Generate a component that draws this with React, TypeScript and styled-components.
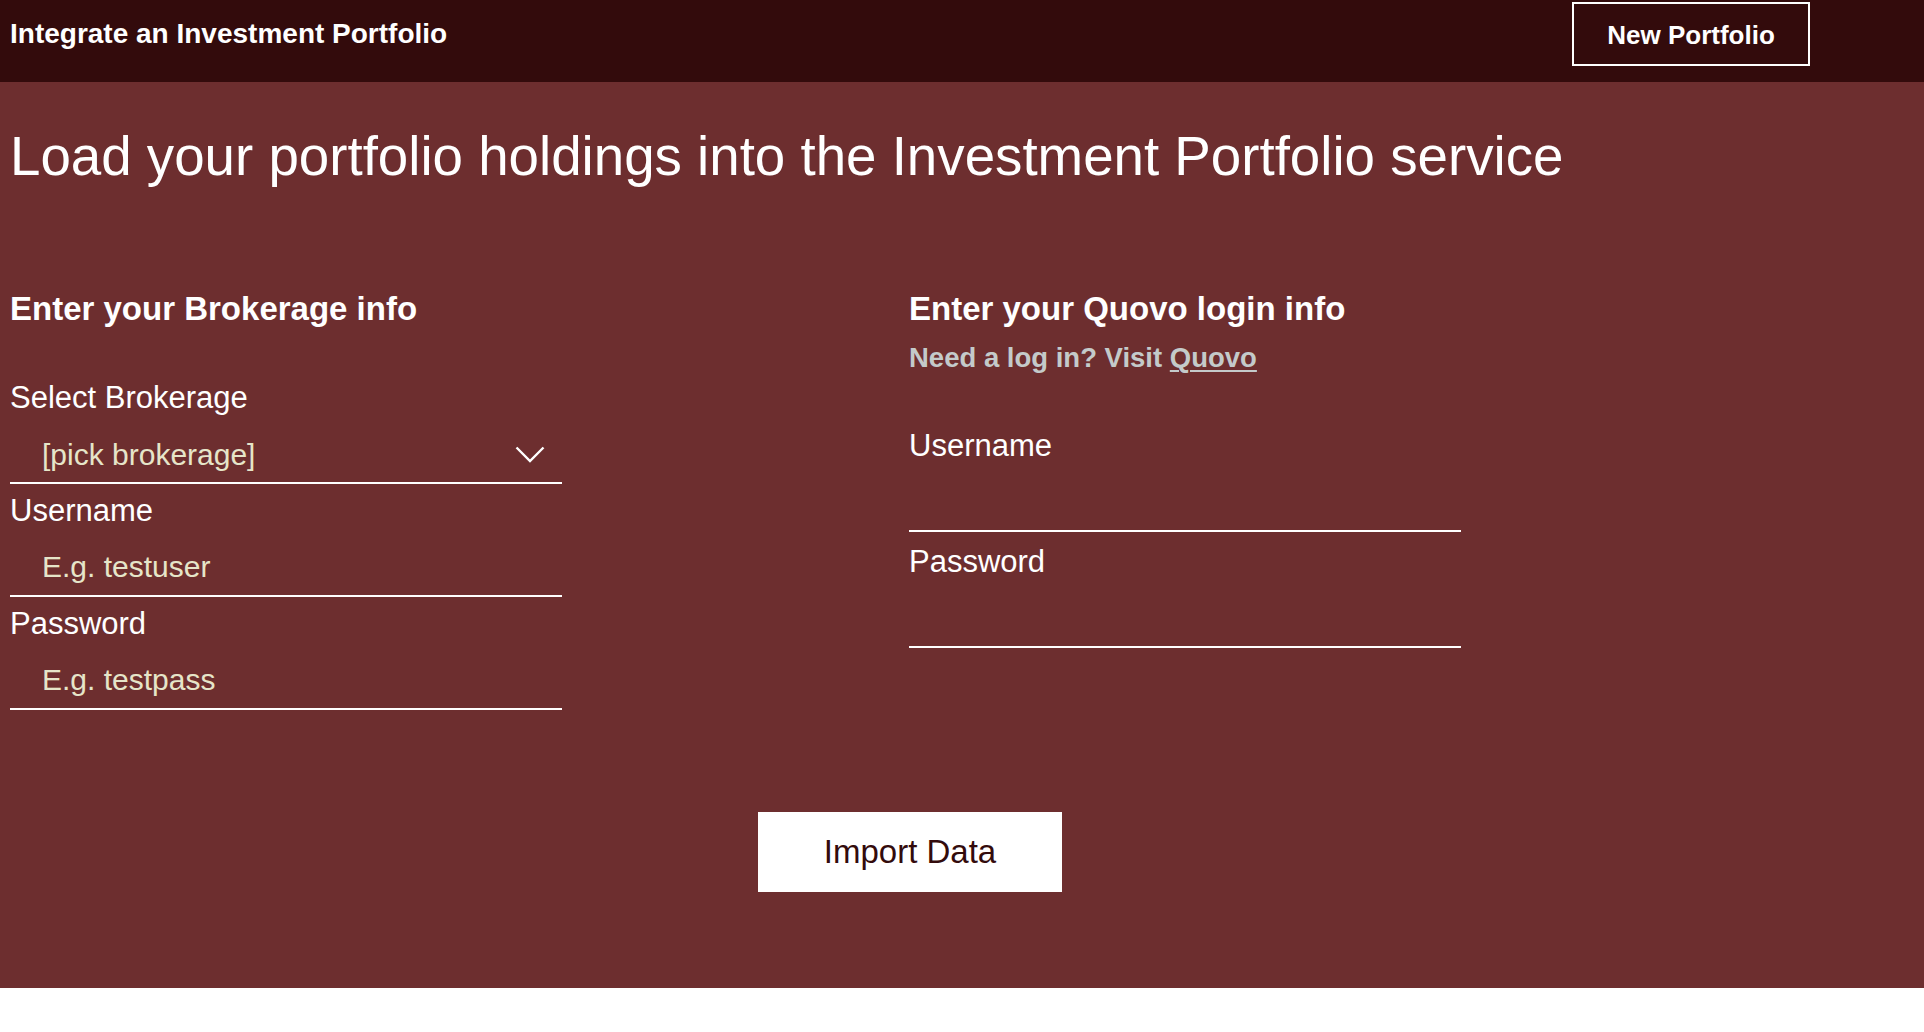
import React from "react";
import styled, { createGlobalStyle } from "styled-components";

const GlobalStyle = createGlobalStyle`
  body {
    margin: 0;
    background: #ffffff;
    font-family: "Liberation Sans", Arial, Helvetica, sans-serif;
  }
`;

const Container = styled.div`
  width: 1800px;
  margin-left: 10px;
`;

const TopBar = styled.header`
  background: #330b0c;
  padding: 2px 0 16px;
`;

const TopBarInner = styled(Container)`
  display: flex;
  justify-content: space-between;
  align-items: center;
`;

const AppTitle = styled.div`
  color: #ffffff;
  font-size: 28px;
  font-weight: 700;
  line-height: 32px;
`;

const OutlineButton = styled.button`
  width: 238px;
  height: 64px;
  background: transparent;
  border: 2px solid #ffffff;
  color: #ffffff;
  font-family: inherit;
  font-size: 26px;
  font-weight: 700;
  padding: 2px 0 0;
  cursor: pointer;
`;

const Main = styled.main`
  background: #6d2e2f;
  padding: 42px 0 96px;
`;

const Headline = styled.h1`
  margin: 0;
  color: #ffffff;
  font-size: 54.7px;
  font-weight: 400;
  line-height: 64px;
  white-space: nowrap;
`;

const Columns = styled.div`
  display: grid;
  grid-template-columns: 899px 1fr;
  margin-top: 101px;
`;

const Column = styled.section`
  display: flex;
  flex-direction: column;
`;

const SectionTitle = styled.h2`
  margin: 0;
  color: #ffffff;
  font-size: 33px;
  font-weight: 700;
  line-height: 40px;
`;

const Hint = styled.p`
  margin: 13px 0 0;
  color: #c4caca;
  font-size: 27.5px;
  font-weight: 700;
  line-height: 32px;

  a {
    color: inherit;
    text-decoration: underline;
    text-decoration-thickness: 2px;
    text-underline-offset: 3px;
  }
`;

const FieldList = styled.div<{ $top: number; $gap: number }>`
  display: flex;
  flex-direction: column;
  gap: ${(p) => p.$gap}px;
  margin-top: ${(p) => p.$top}px;
  width: 552px;
`;

const Field = styled.label`
  display: flex;
  flex-direction: column;
`;

const FieldLabel = styled.span`
  color: #ffffff;
  font-size: 31px;
  line-height: 36px;
`;

const TextInput = styled.input<{ $indent?: boolean }>`
  box-sizing: border-box;
  width: 100%;
  height: 68px;
  padding: 10px 0 0 ${(p) => (p.$indent ? 32 : 0)}px;
  background: transparent;
  border: none;
  border-bottom: 2px solid #ffffff;
  border-radius: 0;
  outline: none;
  color: #e6e5c9;
  font-family: inherit;
  font-size: 30px;

  &::placeholder {
    color: #e6e5c9;
    opacity: 1;
  }
`;

const SelectWrap = styled.div`
  position: relative;
`;

const Select = styled.select`
  box-sizing: border-box;
  width: 100%;
  height: 68px;
  padding: 10px 0 0 32px;
  appearance: none;
  background: transparent;
  border: none;
  border-bottom: 2px solid #ffffff;
  border-radius: 0;
  outline: none;
  color: #e6e5c9;
  font-family: inherit;
  font-size: 30px;
`;

const Chevron = styled.svg`
  position: absolute;
  right: 17px;
  top: 30px;
  pointer-events: none;
`;

const PrimaryButton = styled.button`
  display: block;
  width: 304px;
  height: 80px;
  margin: 102px auto 0;
  background: #ffffff;
  border: none;
  color: #330b0c;
  font-family: inherit;
  font-size: 33px;
  cursor: pointer;
`;

export default function App() {
  return (
    <>
      <GlobalStyle />
      <TopBar>
        <TopBarInner>
          <AppTitle>Integrate an Investment Portfolio</AppTitle>
          <OutlineButton>New Portfolio</OutlineButton>
        </TopBarInner>
      </TopBar>
      <Main>
        <Container>
          <Headline>Load your portfolio holdings into the Investment Portfolio service</Headline>
          <Columns>
            <Column>
              <SectionTitle>Enter your Brokerage info</SectionTitle>
              <FieldList $top={51} $gap={9}>
                <Field>
                  <FieldLabel>Select Brokerage</FieldLabel>
                  <SelectWrap>
                    <Select defaultValue="">
                      <option value="">[pick brokerage]</option>
                    </Select>
                    <Chevron width="30" height="17" viewBox="0 0 30 17">
                      <polyline points="1.5,1.5 15,15 28.5,1.5" fill="none" stroke="#ffffff" strokeWidth="2.4" />
                    </Chevron>
                  </SelectWrap>
                </Field>
                <Field>
                  <FieldLabel>Username</FieldLabel>
                  <TextInput $indent placeholder="E.g. testuser" />
                </Field>
                <Field>
                  <FieldLabel>Password</FieldLabel>
                  <TextInput $indent type="password" placeholder="E.g. testpass" />
                </Field>
              </FieldList>
            </Column>
            <Column>
              <SectionTitle>Enter your Quovo login info</SectionTitle>
              <Hint>
                Need a log in? Visit <a href="#">Quovo</a>
              </Hint>
              <FieldList $top={54} $gap={12}>
                <Field>
                  <FieldLabel>Username</FieldLabel>
                  <TextInput />
                </Field>
                <Field>
                  <FieldLabel>Password</FieldLabel>
                  <TextInput type="password" />
                </Field>
              </FieldList>
            </Column>
          </Columns>
          <PrimaryButton>Import Data</PrimaryButton>
        </Container>
      </Main>
    </>
  );
}
